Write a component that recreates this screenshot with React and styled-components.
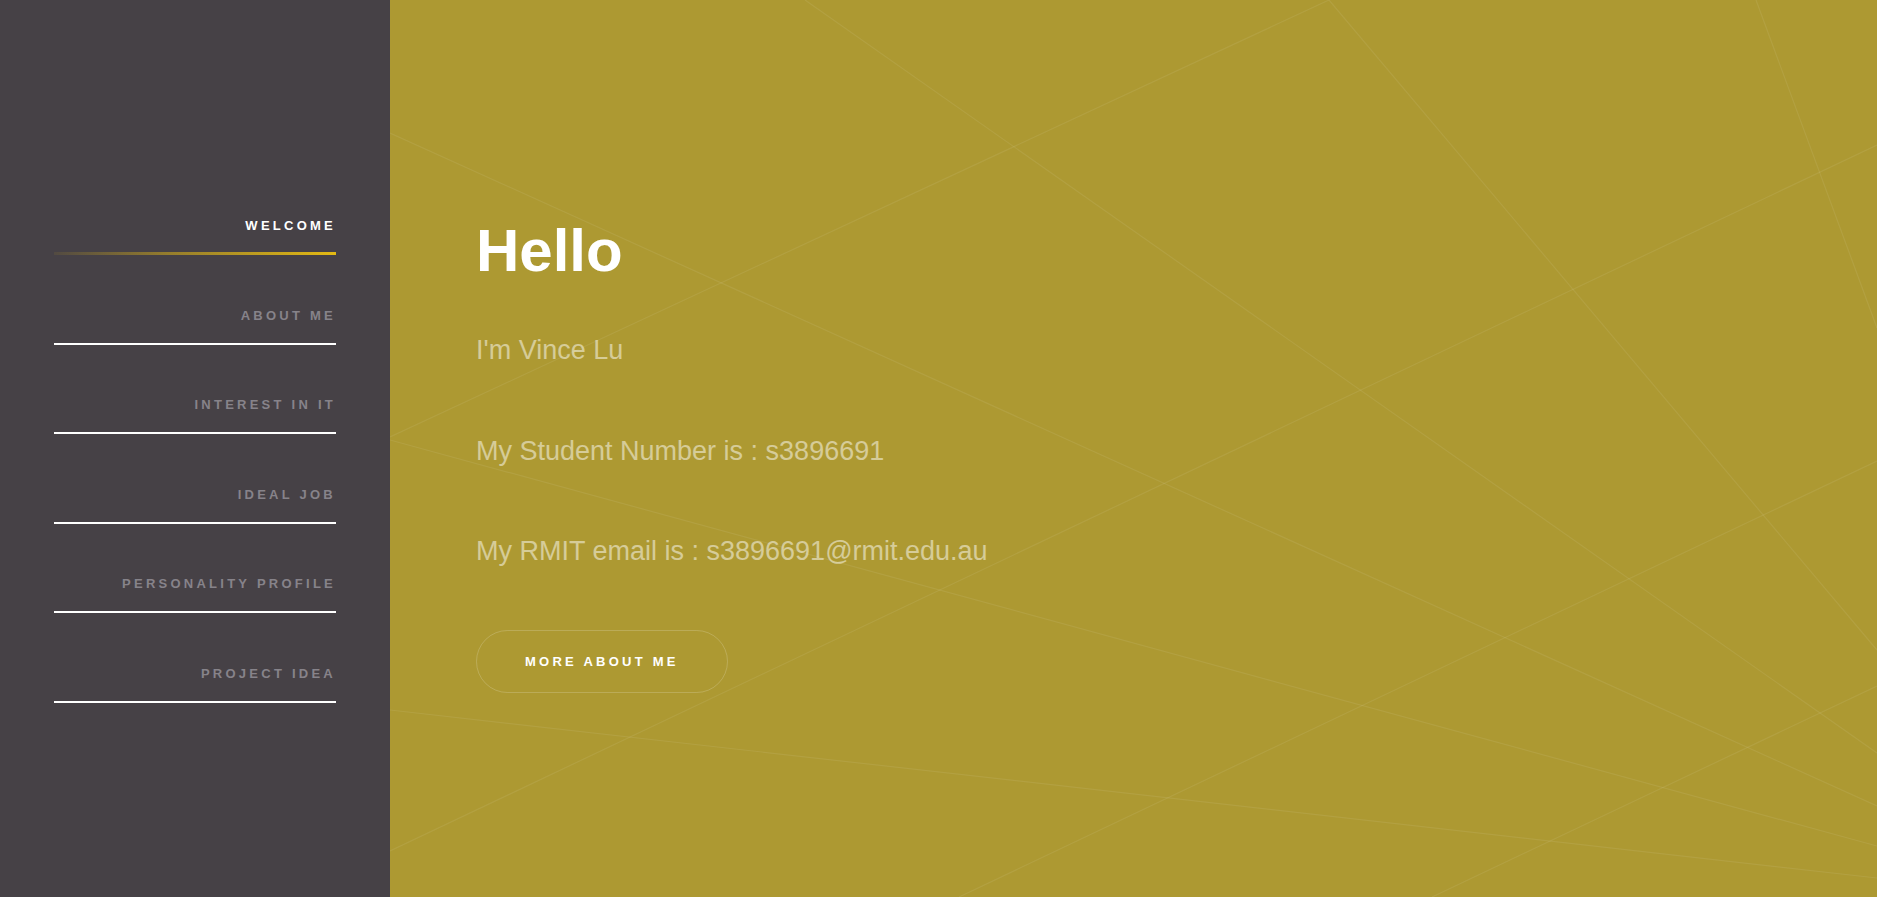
import React from "react";
import styled, { createGlobalStyle } from "styled-components";

const GlobalStyle = createGlobalStyle`
  html, body { margin: 0; padding: 0; height: 100%; }
  body { font-family: "Liberation Sans", Arial, sans-serif; overflow: hidden; }
  #root { height: 100%; }
  * { box-sizing: border-box; }
`;

const Page = styled.div`
  display: flex;
  width: 100%;
  height: 100vh;
`;

const Sidebar = styled.aside`
  flex: 0 0 390px;
  background: #464146;
  padding: 216px 54px 0 54px;
`;

const Nav = styled.nav`
  display: flex;
  flex-direction: column;
  gap: 50.5px;
`;

const NavBlock = styled.div`
  display: flex;
  flex-direction: column;
`;

const NavItem = styled.a`
  display: block;
  text-align: right;
  font-size: 13px;
  line-height: 20px;
  font-weight: 700;
  letter-spacing: 0.25em;
  text-transform: uppercase;
  text-decoration: none;
  color: ${(p) => (p.$active ? "#ffffff" : "#87838a")};
  padding-bottom: ${(p) => (p.$active ? "16px" : "17px")};
  cursor: pointer;
`;

const Underline = styled.span`
  display: block;
  height: ${(p) => (p.$active ? "3px" : "2px")};
  background: ${(p) =>
    p.$active
      ? "linear-gradient(to right, rgba(226,183,20,0.08) 0%, rgba(226,183,20,0.5) 40%, #e3b914 100%)"
      : "#ffffff"};
`;

const Main = styled.main`
  position: relative;
  flex: 1;
  background: #ad9932;
  overflow: hidden;
  padding: 221px 0 0 86px;
`;

const Lines = styled.svg`
  position: absolute;
  inset: 0;
  width: 100%;
  height: 100%;
  pointer-events: none;
`;

const Content = styled.section`
  position: relative;
  display: flex;
  flex-direction: column;
  align-items: flex-start;
`;

const Title = styled.h1`
  margin: 0 0 49px 0;
  font-size: 60px;
  line-height: 60px;
  font-weight: 700;
  color: #ffffff;
`;

const Info = styled.p`
  margin: 0 0 60px 0;
  font-size: 27px;
  line-height: 40.5px;
  color: rgba(255, 255, 255, 0.5);
  &:last-of-type {
    margin-bottom: 58px;
  }
`;

const Button = styled.a`
  display: inline-block;
  padding: 23px 48px;
  border: 1px solid rgba(255, 255, 255, 0.18);
  border-radius: 40px;
  font-size: 13px;
  line-height: 15px;
  font-weight: 700;
  letter-spacing: 0.25em;
  text-transform: uppercase;
  color: #ffffff;
  text-decoration: none;
  cursor: pointer;
`;

const navItems = [
  "Welcome",
  "About Me",
  "Interest in IT",
  "Ideal Job",
  "Personality Profile",
  "Project Idea",
];

const bgLines = [
  [415, 0, 1487, 753],
  [939, 0, 0, 437],
  [939, 0, 1487, 650],
  [1366, 0, 1487, 328],
  [1487, 145, 0, 851],
  [0, 133, 1487, 806],
  [0, 440, 1487, 846],
  [0, 710, 1487, 878],
  [1487, 461, 569, 897],
  [1487, 686, 1042, 897],
];

export default function App() {
  return (
    <>
      <GlobalStyle />
      <Page>
        <Sidebar>
          <Nav>
            {navItems.map((label, i) => (
              <NavBlock key={label}>
                <NavItem $active={i === 0}>{label}</NavItem>
                <Underline $active={i === 0} />
              </NavBlock>
            ))}
          </Nav>
        </Sidebar>
        <Main>
          <Lines viewBox="0 0 1487 897" preserveAspectRatio="none">
            {bgLines.map(([x1, y1, x2, y2], i) => (
              <line
                key={i}
                x1={x1}
                y1={y1}
                x2={x2}
                y2={y2}
                stroke="rgba(255,255,255,0.075)"
                strokeWidth="1.2"
              />
            ))}
          </Lines>
          <Content>
            <Title>Hello</Title>
            <Info>I'm Vince Lu</Info>
            <Info>My Student Number is : s3896691</Info>
            <Info>My RMIT email is : s3896691@rmit.edu.au</Info>
            <Button>More About Me</Button>
          </Content>
        </Main>
      </Page>
    </>
  );
}
